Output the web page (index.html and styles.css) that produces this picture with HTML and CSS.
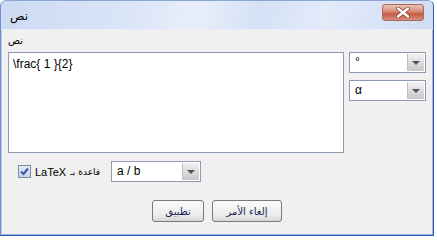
FILE: index.html
```html
<!DOCTYPE html>
<html lang="ar">
<head>
  <meta charset="UTF-8">
  <title>نص</title>
  <link rel="stylesheet" href="styles.css">
</head>
<body>
  <div class="window">
    <div class="title-bar">
      <span class="title">نص</span>
      <button class="close-btn" aria-label="close">
        <svg width="14" height="11" viewBox="0 0 14 11">
          <path d="M2 1.5 L12 9.5 M12 1.5 L2 9.5" stroke="#8a3a2c" stroke-width="4" stroke-linecap="round"/>
          <path d="M2 1.5 L12 9.5 M12 1.5 L2 9.5" stroke="#fff" stroke-width="2.4" stroke-linecap="round"/>
        </svg>
      </button>
    </div>
    <div class="content">
      <div class="label">نص</div>
      <div class="main-row">
        <div class="editor">\frac{ 1 }{2}</div>
        <div class="symbols">
          <div class="combo small">
            <span class="combo-value">°</span>
            <span class="combo-arrow"></span>
          </div>
          <div class="combo small">
            <span class="combo-value">α</span>
            <span class="combo-arrow"></span>
          </div>
        </div>
      </div>
      <div class="options-row">
        <span class="checkbox">
          <svg width="11" height="11" viewBox="0 0 11 11">
            <path d="M2 5.5 L4.5 8 L9 2.5" fill="none" stroke="#3a55a8" stroke-width="2"/>
          </svg>
        </span>
        <span class="latex">LaTeX</span>
        <span class="latex-ar">قاعدة بـ</span>
        <div class="combo wide">
          <span class="combo-value">a / b</span>
          <span class="combo-arrow"></span>
        </div>
      </div>
      <div class="button-row">
        <button class="btn apply">تطبيق</button>
        <button class="btn cancel">إلغاء الأمر</button>
      </div>
    </div>
  </div>
</body>
</html>
```

FILE: styles.css
```css
body {
  margin: 0;
  padding: 0;
  background: #fff;
  font-family: "Liberation Sans", "DejaVu Sans", sans-serif;
  font-size: 12px;
  color: #000;
}
.window {
  width: 434px;
  height: 236px;
  box-sizing: border-box;
  border: 1px solid #2a59a8;
  border-top-color: #8aa6d8;
  border-left-color: #6f8fcf;
  border-radius: 6px 6px 0 0;
  background: #f0f0f0;
  box-shadow: inset -1px -1px 0 #9db6e6, inset 1px 0 0 #b8c9ec;
  overflow: hidden;
}
.title-bar {
  height: 29px;
  display: flex;
  align-items: flex-start;
  justify-content: space-between;
  padding: 2px 9px 0 9px;
  box-sizing: border-box;
  background: linear-gradient(100deg, #cddaf3 0%, #dbe5f8 30%, #e8eefb 45%, #d6e1f6 60%, #e3ebfa 75%, #cfdcf3 100%);
  border-bottom: 1px solid #e9eef8;
}
.title {
  font-family: "DejaVu Sans", sans-serif;
  font-size: 12px;
  margin-top: 6px;
}
.close-btn {
  width: 42px;
  height: 17px;
  padding: 0;
  margin-top: 1px;
  border: 1px solid #a86a5e;
  border-radius: 3px;
  background: linear-gradient(#ebc0b4 0%, #d99483 40%, #c75a45 60%, #d98f7c 100%);
  display: flex;
  align-items: center;
  justify-content: center;
}
.content {
  padding: 4px 0 0 7px;
}
.label {
  font-family: "DejaVu Sans", sans-serif;
  font-size: 10px;
  height: 14px;
  line-height: 14px;
  margin-bottom: 4px;
}
.main-row {
  display: flex;
  gap: 5px;
}
.editor {
  width: 336px;
  height: 101px;
  box-sizing: border-box;
  border: 1px solid #8c9bb0;
  background: #fff;
  padding: 4px 4px;
  font-size: 12px;
}
.symbols {
  display: flex;
  flex-direction: column;
  gap: 7px;
}
.combo {
  height: 21px;
  box-sizing: border-box;
  border: 1px solid #8c9bb0;
  background: #fff;
  display: flex;
  align-items: stretch;
}
.combo.small {
  width: 77px;
}
.combo.wide {
  width: 90px;
}
.combo-value {
  flex: 1;
  padding-left: 5px;
  line-height: 19px;
  font-size: 12px;
}
.combo-arrow {
  width: 16px;
  margin: 1px;
  background: linear-gradient(#f2f2f2, #c8c8c8);
  border-left: 1px solid #c0c0c0;
  position: relative;
}
.combo-arrow::after {
  content: "";
  position: absolute;
  left: 4px;
  top: 7px;
  border-left: 4px solid transparent;
  border-right: 4px solid transparent;
  border-top: 4px solid #4d5566;
}
.options-row {
  display: flex;
  align-items: center;
  margin-top: 8px;
  padding-left: 10px;
}
.checkbox {
  width: 11px;
  height: 11px;
  border: 1px solid #7a8aa6;
  background: linear-gradient(#e6ebf6, #c9d3ea);
  display: flex;
}
.latex {
  margin-left: 4px;
  font-size: 11px;
}
.latex-ar {
  font-family: "DejaVu Sans", sans-serif;
  font-size: 9px;
  margin-left: 4px;
  margin-right: 11px;
}
.button-row {
  display: flex;
  justify-content: center;
  gap: 8px;
  margin-top: 18px;
  padding-right: 7px;
}
.btn {
  height: 22px;
  padding: 0;
  border: 1px solid #7a7a7a;
  border-radius: 3px;
  background: linear-gradient(#fbfbfb, #ececec 70%, #d6d6d6);
  font-family: "DejaVu Sans", sans-serif;
  font-size: 10px;
  color: #1a1f5a;
}
.btn.apply {
  width: 52px;
}
.btn.cancel {
  width: 70px;
}
```
